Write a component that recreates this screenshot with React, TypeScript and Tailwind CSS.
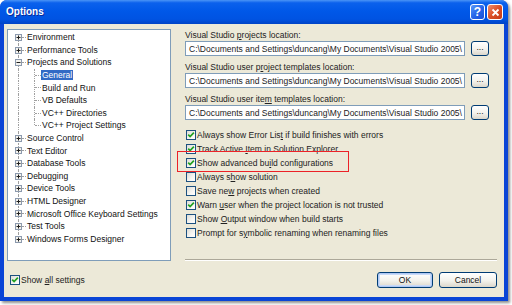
import React from 'react';

type Node = {
  t: React.ReactNode;
  kind: 'plus' | 'minus' | 'child';
  sel?: boolean;
  lastChild?: boolean;
};

const tree: Node[] = [
  { t: 'Environment', kind: 'plus' },
  { t: 'Performance Tools', kind: 'plus' },
  { t: 'Projects and Solutions', kind: 'minus' },
  { t: 'General', kind: 'child', sel: true },
  { t: 'Build and Run', kind: 'child' },
  { t: 'VB Defaults', kind: 'child' },
  { t: 'VC++ Directories', kind: 'child' },
  { t: 'VC++ Project Settings', kind: 'child', lastChild: true },
  { t: 'Source Control', kind: 'plus' },
  { t: 'Text Editor', kind: 'plus' },
  { t: 'Database Tools', kind: 'plus' },
  { t: 'Debugging', kind: 'plus' },
  { t: 'Device Tools', kind: 'plus' },
  { t: 'HTML Designer', kind: 'plus' },
  { t: 'Microsoft Office Keyboard Settings', kind: 'plus' },
  { t: 'Test Tools', kind: 'plus' },
  { t: 'Windows Forms Designer', kind: 'plus' },
];

const PATH = 'C:\\Documents and Settings\\duncang\\My Documents\\Visual Studio 2005\\';

const locations: React.ReactNode[] = [
  <>Visual Studio <u>p</u>rojects location:</>,
  <>Visual Studio user p<u>r</u>oject templates location:</>,
  <>Visual Studio user ite<u>m</u> templates location:</>,
];

const options: { t: React.ReactNode; on: boolean }[] = [
  { t: <>Always show Error Lis<u>t</u> if build finishes with errors</>, on: true },
  { t: <>Track Active <u>I</u>tem in Solution Explorer</>, on: true },
  { t: <>Show advanced bu<u>i</u>ld configurations</>, on: true },
  { t: <>Always s<u>h</u>ow solution</>, on: false },
  { t: <>Save ne<u>w</u> projects when created</>, on: false },
  { t: <>Warn <u>u</u>ser when the project location is not trusted</>, on: true },
  { t: <>Show <u>O</u>utput window when build starts</>, on: false },
  { t: <>Prompt for s<u>y</u>mbolic renaming when renaming files</>, on: false },
];

function ExpandBox({ open }: { open: boolean }) {
  return (
    <svg width="7" height="7" viewBox="0 0 7 7" className="absolute left-[7px] top-[3px]">
      <rect x="0.5" y="0.5" width="6" height="6" fill="#F4F3EE" stroke="#8C9AAE" />
      <path d="M1.5 3.5h4" stroke="#1F1F1F" />
      {!open && <path d="M3.5 1.5v4" stroke="#1F1F1F" />}
    </svg>
  );
}

function TreeRow({ node, first, last }: { node: Node; first: boolean; last: boolean }) {
  const line = 'absolute border-l border-dotted border-[#A0A0A0]';
  const isChild = node.kind === 'child';
  return (
    <div className="relative flex h-[12.6px] items-center whitespace-nowrap">
      {!first && <span className={`${line} left-[10px] top-0 h-[6.3px]`} />}
      {!last && <span className={`${line} left-[10px] top-[6.3px] h-[6.3px]`} />}
      {isChild ? (
        <>
          <span className={`${line} left-[26px] top-0 ${node.lastChild ? 'h-[6.3px]' : 'h-full'}`} />
          <span className="absolute left-[27px] top-[6px] w-[6px] border-t border-dotted border-[#A0A0A0]" />
          <span className="w-[33px] shrink-0" />
        </>
      ) : (
        <>
          <ExpandBox open={node.kind === 'minus'} />
          <span className="absolute left-[14px] top-[6px] w-[4px] border-t border-dotted border-[#A0A0A0]" />
          <span className="w-[18px] shrink-0" />
        </>
      )}
      <span
        className={`px-[1px] leading-[10px] ${node.sel ? 'bg-[#316AC5] text-white' : 'text-[#111]'}`}
      >
        {node.t}
      </span>
    </div>
  );
}

function Check({ on }: { on: boolean }) {
  return (
    <span className="flex h-[10px] w-[10px] shrink-0 items-center justify-center border border-[#1C5180] bg-[linear-gradient(135deg,#DCDCD6,#F6F6F3_60%,#FFFFFF)]">
      {on && (
        <svg width="8" height="8" viewBox="0 0 8 8">
          <path d="M1.2 3.6 L3.1 5.6 L6.9 1.6" stroke="#21A121" strokeWidth="1.7" fill="none" />
        </svg>
      )}
    </span>
  );
}

const btn =
  'flex items-center justify-center rounded-[3px] border border-[#003C74] bg-[linear-gradient(to_bottom,#FFFFFF,#F3F2EC_55%,#DCD7CB)] text-[#111]';

export default function App() {
  return (
    <div className="h-[305px] w-[512px] bg-white font-['Liberation_Sans',Arial,sans-serif] text-[8.5px] leading-[12px] text-black">
      <div className="flex h-[301px] w-[508px] flex-col rounded-t-[7px] bg-[#0A45D6] shadow-[2px_2px_3px_rgba(0,0,0,0.45)]">
        {/* title bar */}
        <div className="flex h-[24px] shrink-0 items-center rounded-t-[7px] bg-[linear-gradient(to_bottom,#4A94F6_0%,#0B61EC_12%,#0058E8_45%,#0053E2_80%,#0043C6_100%)] pl-[6px] pr-[5px]">
          <span className="text-[10px] font-bold text-white [text-shadow:1px_1px_0_#0B2A98]">Options</span>
          <div className="ml-auto flex gap-[2px]">
            <div className="flex h-[16px] w-[15px] items-center justify-center rounded-[3px] border border-white bg-[linear-gradient(135deg,#5A9AF9,#2766EA_50%,#1A50D6)] text-[12px] font-bold leading-none text-white">
              ?
            </div>
            <div className="flex h-[16px] w-[16px] items-center justify-center rounded-[3px] border border-white bg-[linear-gradient(135deg,#EF8F6E,#DB4F26_50%,#C33A16)]">
              <svg width="9" height="9" viewBox="0 0 9 9">
                <path d="M1.5 1.5 L7.5 7.5 M7.5 1.5 L1.5 7.5" stroke="#fff" strokeWidth="1.8" />
              </svg>
            </div>
          </div>
        </div>

        {/* client area */}
        <div className="mx-[4px] mb-[4px] flex flex-1 flex-col bg-[#ECE9D8] pl-[3px] pr-[7px] pt-[5px]">
          <div className="flex h-[232px]">
            <div className="w-[164px] shrink-0 border border-[#7F9DB9] bg-white pt-[1px]">
              {tree.map((n, i) => (
                <TreeRow key={i} node={n} first={i === 0} last={i === tree.length - 1} />
              ))}
            </div>

            <div className="relative ml-[14px] flex flex-1 flex-col">
              {locations.map((l, i) => (
                <div key={i} className={i > 0 ? 'mt-[5px]' : ''}>
                  <div className="h-[12px] whitespace-nowrap text-[#222]">{l}</div>
                  <div className="flex h-[15px] gap-[6px]">
                    <div className="flex w-[280px] items-center overflow-hidden whitespace-nowrap border border-[#7F9DB9] bg-white pl-[3px] text-[#222]">
                      {PATH}
                    </div>
                    <div className={`${btn} h-[15px] w-[18px] pb-[2px] leading-none`}>...</div>
                  </div>
                </div>
              ))}

              <div className="mt-[8px] flex flex-col">
                {options.map((o, i) => (
                  <div key={i} className="flex h-[14px] items-center whitespace-nowrap text-[#222]">
                    <span className="ml-[1px]">
                      <Check on={o.on} />
                    </span>
                    <span className="ml-[1px]">{o.t}</span>
                  </div>
                ))}
              </div>

              <div className="mt-auto h-[2px] border-t border-[#ACA899] bg-white" />

              {/* annotation highlight */}
              <div className="absolute left-[-8px] top-[122px] h-[21px] w-[172px] border-[1.5px] border-[#EC2227]" />
            </div>
          </div>

          <div className="mt-[11px] flex items-start">
            <div className="ml-[3px] mt-[2px] flex items-center whitespace-nowrap text-[#222]">
              <Check on />
              <span className="ml-[1px]">
                Show <u>a</u>ll settings
              </span>
            </div>
            <div className="ml-auto flex gap-[6px]">
              <div className={`${btn} h-[16px] w-[56px] shadow-[inset_0_0_0_1px_#AFC9F5,inset_0_0_0_2px_#C9DAF8]`}>OK</div>
              <div className={`${btn} h-[16px] w-[58px]`}>Cancel</div>
            </div>
          </div>
        </div>
      </div>
    </div>
  );
}
